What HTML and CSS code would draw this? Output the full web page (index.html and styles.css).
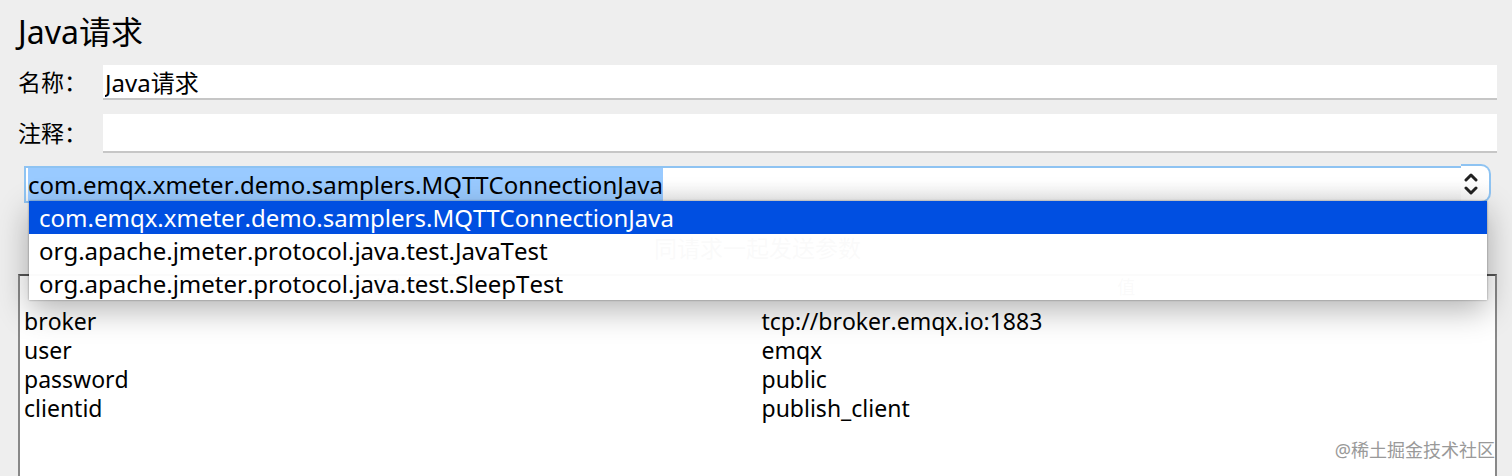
FILE: index.html
```
<!DOCTYPE html>
<html lang="zh-CN">

<head>
    <meta charset="UTF-8">
    <meta name="viewport" content="width=device-width, initial-scale=1.0">
    <title>Java请求</title>
    <link rel="stylesheet" href="styles.css">
    <script>
        function onLoad() {
            var input = document.getElementById('classname');
            input.focus();
            input.select();
        }
    </script>
</head>

<body onload="onLoad()">
    <main class="sampler">
        <h1 class="title">Java请求</h1>
        <div class="field">
            <label for="name">名称：</label>
            <input type="text" id="name" value="Java请求">
        </div>
        <div class="field field-comment">
            <label for="comment">注释：</label>
            <input type="text" id="comment">
        </div>

        <div class="combo">
            <input type="text" id="classname" class="combo-input" aria-label="类名称" value="com.emqx.xmeter.demo.samplers.MQTTConnectionJava" spellcheck="false">
            <button type="button" class="combo-button" aria-label="展开">
                <svg width="16" height="22" viewBox="0 0 16 22" fill="none" stroke="#222" stroke-width="3" stroke-linecap="round" stroke-linejoin="round">
                    <polyline points="3 7 8 2 13 7"></polyline>
                    <polyline points="3 15 8 20 13 15"></polyline>
                </svg>
            </button>
            <select class="combo-list" size="3" aria-label="类名称列表">
                <option selected>com.emqx.xmeter.demo.samplers.MQTTConnectionJava</option>
                <option>org.apache.jmeter.protocol.java.test.JavaTest</option>
                <option>org.apache.jmeter.protocol.java.test.SleepTest</option>
            </select>
        </div>

        <h2 class="subtitle" id="params">同请求一起发送参数</h2>
        <div class="params">
            <table aria-labelledby="params">
                <thead>
                    <tr><th>名称</th><th>值</th></tr>
                </thead>
                <tbody>
                    <tr><td>broker</td><td>tcp://broker.emqx.io:1883</td></tr>
                    <tr><td>user</td><td>emqx</td></tr>
                    <tr><td>password</td><td>public</td></tr>
                    <tr><td>clientid</td><td>publish_client</td></tr>
                </tbody>
            </table>
            <div class="watermark">@稀土掘金技术社区</div>
        </div>
    </main>
</body>

</html>
```
FILE: styles.css
```
* {
    box-sizing: border-box;
}

html,
body {
    margin: 0;
    height: 100%;
}

body {
    background: #eee;
    color: #000;
    font-family: "Noto Sans", "Noto Sans CJK SC", sans-serif;
    font-size: 24px;
    font-kerning: none;
}

input,
select,
button {
    font: inherit;
    font-kerning: none;
    color: inherit;
    margin: 0;
    outline: none;
}

.sampler {
    display: flex;
    flex-direction: column;
    min-height: 100%;
    padding: 12px 15px 0 18px;
}

.title {
    margin: 0 0 13px;
    font-size: 32px;
    font-weight: 400;
    line-height: 40px;
}

.field {
    display: flex;
    align-items: center;
    height: 35px;
    margin-bottom: 14px;
}

.field label {
    width: 85px;
    line-height: 32px;
    padding-bottom: 2px;
    font-size: 23px;
    white-space: nowrap;
}

.field input {
    flex: 1;
    height: 100%;
    padding: 0 2px;
    border: 0;
    border-bottom: 2px solid #c6c6c6;
    background: #fff;
}

.field-comment {
    height: 39px;
    margin-bottom: 11px;
}

.combo {
    position: relative;
    display: flex;
    align-items: flex-end;
    height: 39px;
    margin: 0 6px;
}

.combo-input {
    flex: 1;
    height: 37px;
    padding: 0 2px;
    border: 2px solid #8ec3f2;
    border-right: 0;
    background: linear-gradient(#fff 40%, #f0f0f0);
}

.combo-input::selection {
    background: #99caff;
    color: #000;
}

.combo-button {
    display: flex;
    align-items: center;
    justify-content: center;
    width: 30px;
    height: 39px;
    padding: 0 8px 0 0;
    border: 2px solid #8ec3f2;
    border-left: 0;
    border-radius: 0 10px 10px 0;
    background: linear-gradient(#fff 40%, #f6f6f6);
}

.combo-list {
    position: absolute;
    top: 37px;
    left: 5px;
    right: 4px;
    height: 99px;
    padding: 0;
    border: 0;
    border-radius: 0;
    background: rgba(255, 255, 255, .98);
    box-shadow: 0 0 2px rgba(0, 0, 0, .4), 0 10px 30px rgba(0, 0, 0, .3);
    overflow: hidden;
}

.combo-list option {
    height: 33px;
    min-height: 33px;
    padding: 0 10px;
    line-height: 33px;
}

.combo-list option:checked {
    background: #004fe1 linear-gradient(#004fe1, #004fe1);
    color: #fff;
}

.subtitle {
    margin: 29px 0 10px;
    font-size: 23px;
    font-weight: 400;
    line-height: 32px;
    text-align: center;
}

.params {
    flex: 1;
    display: flex;
    flex-direction: column;
    justify-content: space-between;
    border: 2px solid #888;
    border-top-color: #555;
    border-bottom: 0;
    background: #fff;
}

.params table {
    width: 100%;
    table-layout: fixed;
    border-collapse: collapse;
    font-size: 23px;
    line-height: 29px;
}

.params th {
    height: 31px;
    padding: 0;
    font-size: 18px;
    font-weight: 400;
    line-height: 22px;
    vertical-align: top;
}

.params td {
    height: 29px;
    padding: 0 4px;
}

.watermark {
    align-self: flex-end;
    margin-bottom: 12px;
    font-size: 18px;
    line-height: 28px;
    color: #999;
}
```
